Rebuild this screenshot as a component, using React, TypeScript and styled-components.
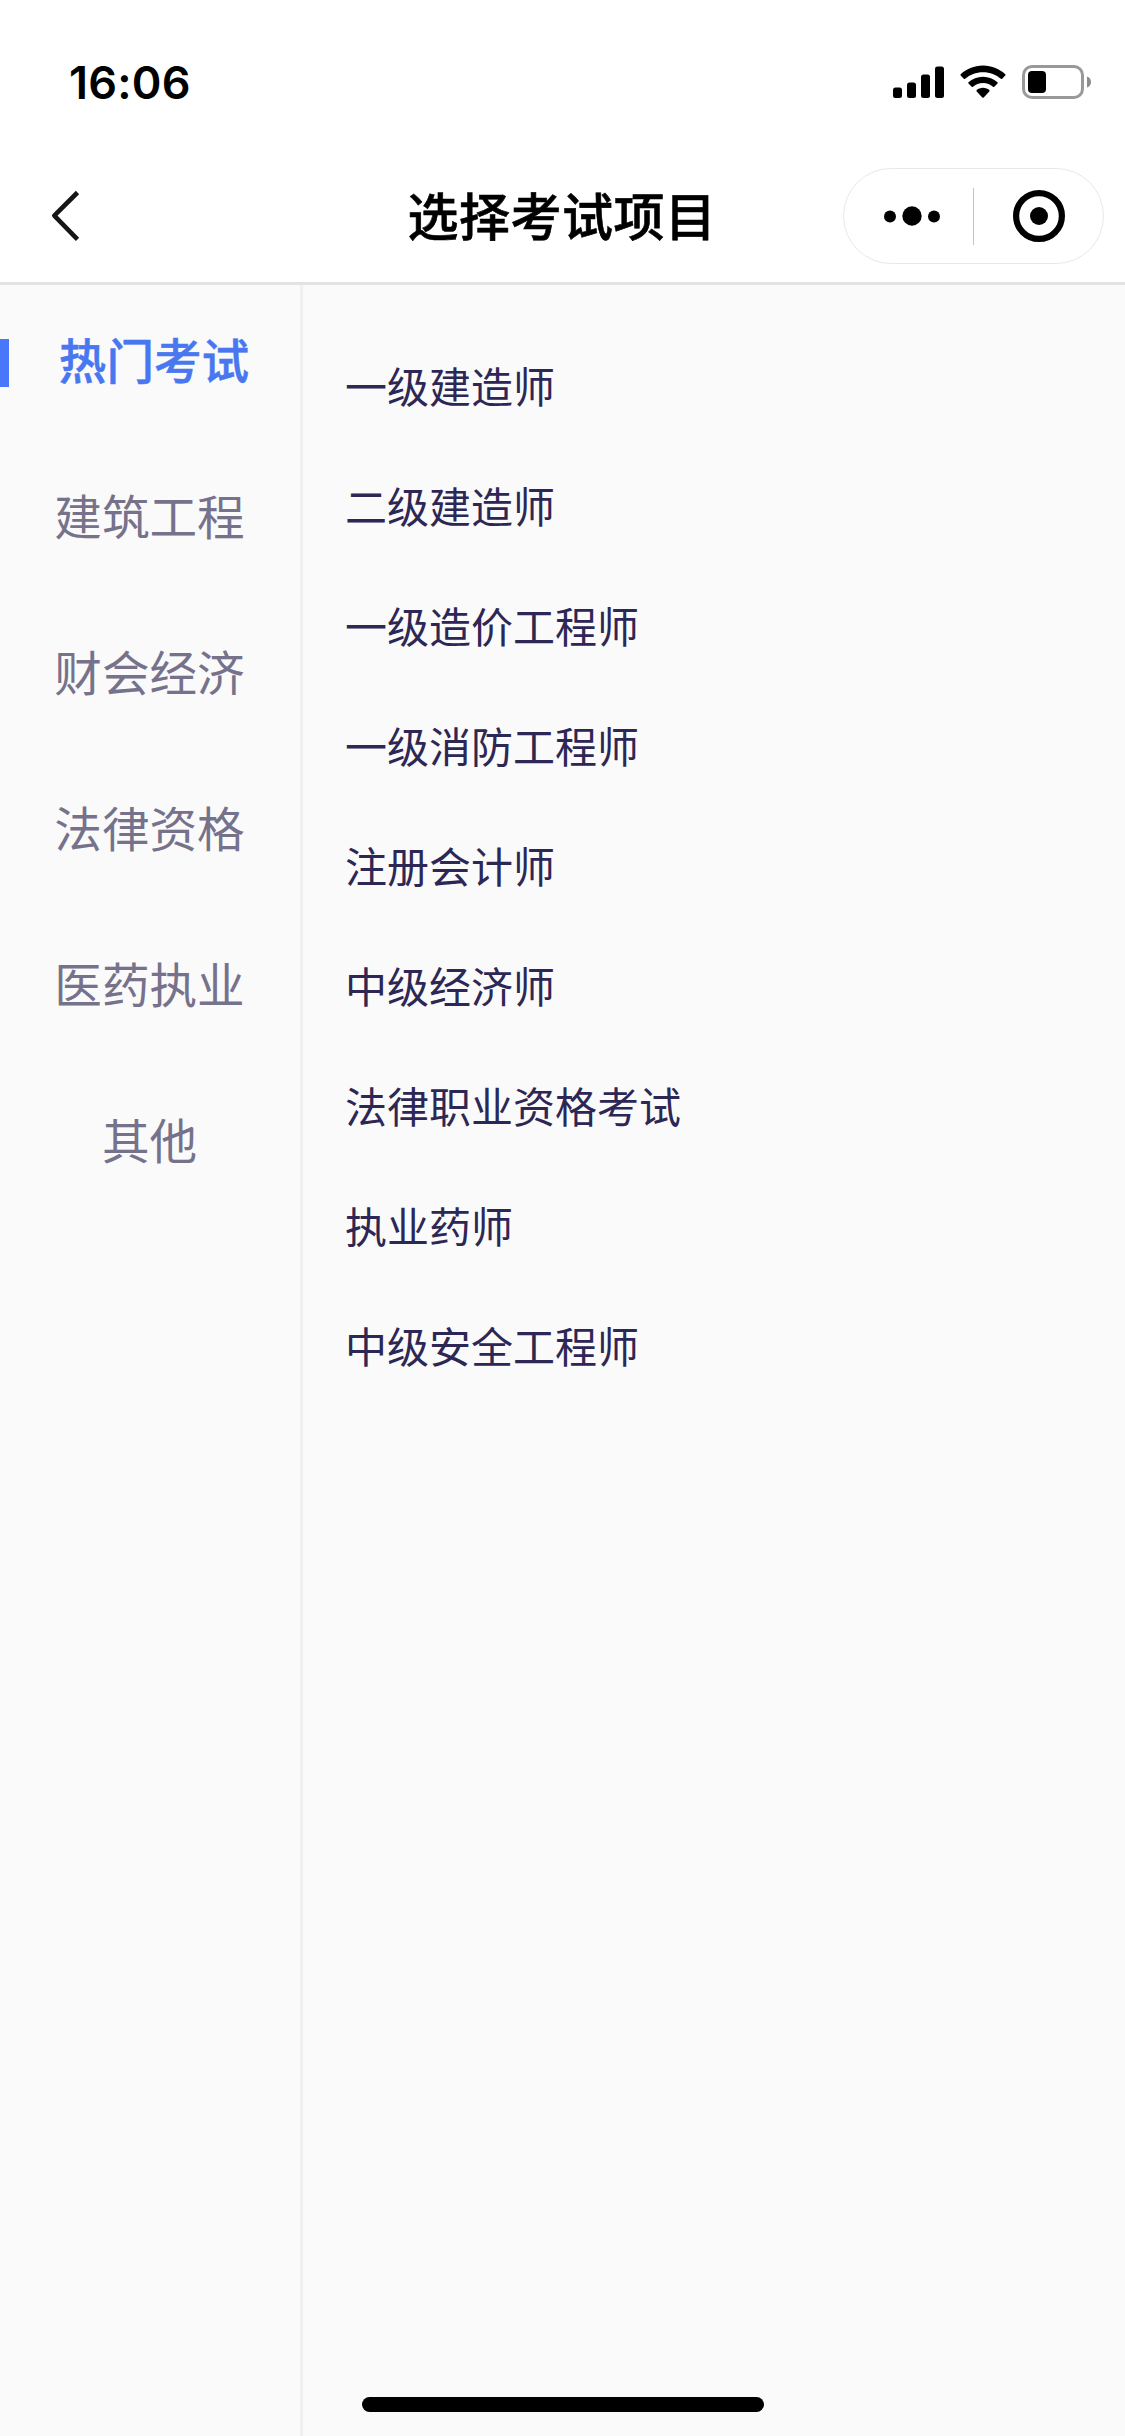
import React, { useState } from "react";
import styled, { createGlobalStyle } from "styled-components";

const GlobalStyle = createGlobalStyle`
  * { box-sizing: border-box; }
  body {
    margin: 0;
    background: #fafafa;
    font-family: "Noto Sans CJK SC", "Liberation Sans", sans-serif;
  }
`;

const Screen = styled.div`
  position: relative;
  display: flex;
  flex-direction: column;
  width: 1125px;
  height: 2436px;
  overflow: hidden;
  background: #fafafa;
`;

const Header = styled.header`
  flex: none;
  height: 285px;
  background: #fff;
  border-bottom: 3px solid #e3e3e3;
`;

const StatusBar = styled.div`
  display: flex;
  align-items: center;
  justify-content: space-between;
  height: 132px;
  padding: 32px 33px 0 69px;
`;

const Clock = styled.time`
  font: 600 45px/1 Inter, "Liberation Sans", sans-serif;
  letter-spacing: 0.2px;
  color: #000;
`;

const StatusIcons = styled.div`
  display: flex;
  align-items: center;
`;

const NavBar = styled.nav`
  display: grid;
  grid-template-columns: 300px 1fr 300px;
  align-items: center;
  height: 150px;
  padding-top: 18px;
`;

const BackButton = styled.button`
  display: flex;
  width: 90px;
  margin-left: 48px;
  padding: 0;
  border: 0;
  background: none;
`;

const Title = styled.h1`
  margin: 0;
  padding: 0 1px 4px 0;
  font-size: 51px;
  font-weight: 500;
  line-height: 72px;
  letter-spacing: 0.5px;
  text-align: center;
  white-space: nowrap;
  color: #000;
  -webkit-text-stroke: 0.6px #000;
`;

const Capsule = styled.div`
  display: flex;
  align-items: center;
  width: 261px;
  height: 96px;
  margin-left: 18px;
  border: 1px solid #e8e8e8;
  border-radius: 48px;
`;

const CapsuleButton = styled.button<{ $inset?: number }>`
  display: flex;
  flex: none;
  width: 129px;
  align-items: center;
  justify-content: center;
  padding: 0 0 0 ${(p) => p.$inset ?? 0}px;
  border: 0;
  background: none;
`;

const CapsuleDivider = styled.span`
  width: 1px;
  height: 57px;
  background: #c4c4c4;
`;

const Body = styled.main`
  display: flex;
  flex: 1;
`;

const Sidebar = styled.aside`
  display: flex;
  flex-direction: column;
  gap: 108px;
  width: 303px;
  padding-top: 54px;
  border-right: 3px solid #f0f0f0;
`;

const Category = styled.button<{ $active: boolean }>`
  height: 48px;
  padding: 0 1px 8px 0;
  border: 0;
  border-left: ${(p) => (p.$active ? "9px solid #4877fa" : "0")};
  background: none;
  font-family: inherit;
  font-size: 47.6px;
  font-weight: ${(p) => (p.$active ? 500 : 400)};
  line-height: 40px;
  text-align: center;
  white-space: nowrap;
  color: ${(p) => (p.$active ? "#4877f0" : "#76728c")};
  -webkit-text-stroke: ${(p) => (p.$active ? "0.5px #4877f0" : "0")};
`;

const ExamList = styled.ul`
  flex: 1;
  margin: 0;
  padding: 40px 0 0 42px;
  list-style: none;
`;

const Exam = styled.li`
  height: 120px;
  font-size: 42px;
  line-height: 120px;
  color: #2d2755;
`;

const HomeIndicator = styled.div`
  position: absolute;
  left: 362px;
  bottom: 24px;
  width: 402px;
  height: 15px;
  border-radius: 8px;
  background: #000;
`;

const WifiSvg = styled.svg`
  margin: 0 16px;
`;

const SignalIcon = () => (
  <svg width="51" height="34" viewBox="0 0 51 34">
    <rect x="0" y="22.5" width="9" height="10.5" rx="2.5" />
    <rect x="14" y="17.5" width="9" height="15.5" rx="2.5" />
    <rect x="28" y="9.5" width="9" height="23.5" rx="2.5" />
    <rect x="42" y="1.5" width="9" height="31.5" rx="2.5" />
  </svg>
);

const WifiIcon = () => (
  <WifiSvg width="46" height="34" viewBox="0 0 46 34">
    <path d="M23 .5C14 .5 6.3 4 .7 9.2c-.4.4-.4.9 0 1.300l3.100 3.300c.4.4.9.4 1.300 0C9.800 9.700 16 7.200 23 7.200s13.200 2.500 17.900 6.600c.4.4.9.4 1.300 0l3.100-3.300c.4-.4.4-.9 0-1.300C39.700 4 32 .5 23 .5z" />
    <path d="M23 11.700c-5.700 0-10.700 2.100-14.500 5.500-.4.4-.4.9 0 1.300l3.200 3.300c.4.4.9.4 1.300 0 2.600-2.300 6-3.800 10-3.800s7.400 1.500 10 3.800c.4.4.9.4 1.300 0l3.200-3.300c.4-.4.4-.9 0-1.300-3.800-3.400-8.800-5.500-14.500-5.500z" />
    <path d="M23 22.800c-2.500 0-4.700.9-6.300 2.300-.4.4-.4.900 0 1.300l5.600 6c.4.4 1 .4 1.400 0l5.600-6c.4-.4.4-.9 0-1.300-1.600-1.400-3.800-2.300-6.300-2.300z" />
  </WifiSvg>
);

const BatteryIcon = () => (
  <svg width="70" height="34" viewBox="0 0 70 34">
    <rect x="1.5" y="1.5" width="59" height="31" rx="8.5" fill="none" stroke="#999" strokeWidth="3" />
    <rect x="6" y="6" width="18" height="22" rx="4" />
    <path d="M65 11.500c2.500.8 4 3 4 5.500s-1.500 4.700-4 5.500z" fill="#8c8c8c" />
  </svg>
);

const BackIcon = () => (
  <svg width="34" height="52" viewBox="0 0 34 52" fill="none" stroke="#161616" strokeWidth="4.6" strokeLinejoin="round">
    <path d="M29.500 2.500 6.300 25.700 29.500 49.300" />
  </svg>
);

const MoreIcon = () => (
  <svg width="56" height="20" viewBox="0 0 56 20">
    <circle cx="6" cy="10.5" r="6" />
    <circle cx="28" cy="10" r="9.7" />
    <circle cx="50" cy="10.5" r="6" />
  </svg>
);

const TargetIcon = () => (
  <svg width="52" height="52" viewBox="0 0 52 52">
    <circle cx="26" cy="26" r="22.9" fill="none" stroke="#000" strokeWidth="6.2" />
    <circle cx="26" cy="26" r="9" />
  </svg>
);

const categories = ["热门考试", "建筑工程", "财会经济", "法律资格", "医药执业", "其他"];

const hotExams = [
  "一级建造师",
  "二级建造师",
  "一级造价工程师",
  "一级消防工程师",
  "注册会计师",
  "中级经济师",
  "法律职业资格考试",
  "执业药师",
  "中级安全工程师",
];

export default function App() {
  const [active, setActive] = useState(0);
  return (
    <>
      <GlobalStyle />
      <Screen>
        <Header>
          <StatusBar>
            <Clock>16:06</Clock>
            <StatusIcons>
              <SignalIcon />
              <WifiIcon />
              <BatteryIcon />
            </StatusIcons>
          </StatusBar>
          <NavBar>
            <BackButton>
              <BackIcon />
            </BackButton>
            <Title>选择考试项目</Title>
            <Capsule>
              <CapsuleButton $inset={6}>
                <MoreIcon />
              </CapsuleButton>
              <CapsuleDivider />
              <CapsuleButton>
                <TargetIcon />
              </CapsuleButton>
            </Capsule>
          </NavBar>
        </Header>
        <Body>
          <Sidebar>
            {categories.map((name, i) => (
              <Category key={name} $active={i === active} onClick={() => setActive(i)}>
                {name}
              </Category>
            ))}
          </Sidebar>
          <ExamList>
            {hotExams.map((name) => (
              <Exam key={name}>{name}</Exam>
            ))}
          </ExamList>
        </Body>
        <HomeIndicator />
      </Screen>
    </>
  );
}
